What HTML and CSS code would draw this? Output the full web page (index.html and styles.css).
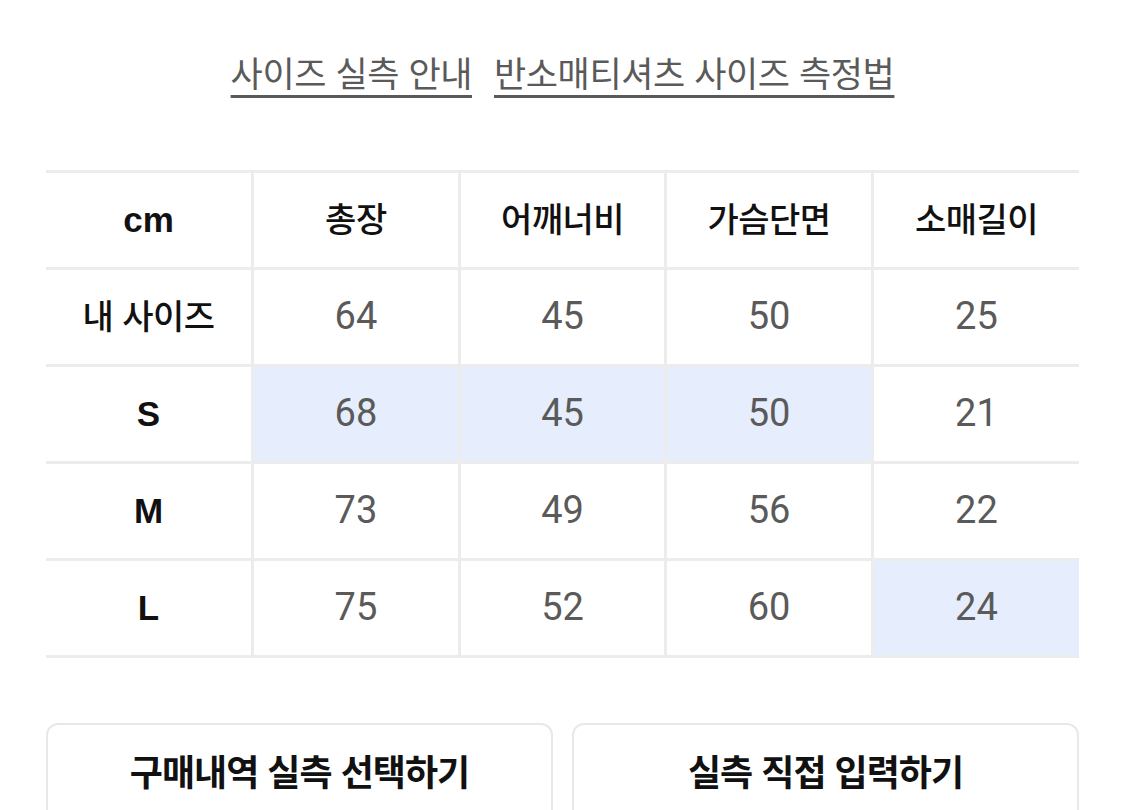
FILE: index.html
```html
<!DOCTYPE html>
<html lang="ko">
<head>
<meta charset="utf-8">
<title>사이즈 실측 안내</title>
<link rel="stylesheet" href="styles.css">
</head>
<body>
<main class="page">
  <nav class="links">
    <a href="#" class="link">사이즈 실측 안내</a>
    <a href="#" class="link">반소매티셔츠 사이즈 측정법</a>
  </nav>
  <table class="size-table">
    <thead>
      <tr>
        <th class="unit">cm</th><th>총장</th><th>어깨너비</th><th>가슴단면</th><th>소매길이</th>
      </tr>
    </thead>
    <tbody>
      <tr>
        <th>내 사이즈</th><td>64</td><td>45</td><td>50</td><td>25</td>
      </tr>
      <tr>
        <th class="size">S</th><td class="hl">68</td><td class="hl">45</td><td class="hl">50</td><td>21</td>
      </tr>
      <tr>
        <th class="size">M</th><td>73</td><td>49</td><td>56</td><td>22</td>
      </tr>
      <tr>
        <th class="size">L</th><td>75</td><td>52</td><td>60</td><td class="hl">24</td>
      </tr>
    </tbody>
  </table>
  <div class="actions">
    <button class="btn">구매내역 실측 선택하기</button>
    <button class="btn">실측 직접 입력하기</button>
  </div>
</main>
</body>
</html>
```
FILE: styles.css
```css
html, body {
  margin: 0;
  padding: 0;
  background: #fff;
}
body {
  font-family: "Noto Sans CJK KR", "Noto Sans", sans-serif;
  color: #111;
  overflow: hidden;
}
.page {
  width: 1033px;
  padding: 46px 0 0 46px;
}
.links {
  display: flex;
  justify-content: center;
  gap: 22px;
  height: 124px;
}
.link {
  font-size: 35px;
  letter-spacing: -0.4px;
  color: #5a5a5a;
  text-decoration: underline;
  text-decoration-thickness: 3px;
  text-underline-offset: 8px;
  line-height: 52px;
}
.size-table {
  width: 1033px;
  table-layout: fixed;
  border-collapse: collapse;
}
.size-table th,
.size-table td {
  height: 94px;
  padding: 0;
  border: 3px solid #ececec;
  text-align: center;
  vertical-align: middle;
}
.size-table tr > :first-child { border-left: none; }
.size-table tr > :last-child { border-right: none; }
.size-table th {
  font-size: 34px;
  font-weight: 500;
  color: #111;
  letter-spacing: -0.5px;
  height: 88px;
  padding-bottom: 6px;
}
.size-table th.unit,
.size-table th.size {
  font-family: "Liberation Sans", "Noto Sans CJK KR", sans-serif;
  font-weight: 700;
  font-size: 35px;
  letter-spacing: 0;
  height: 94px;
  padding-bottom: 0;
}
.size-table td {
  font-family: Roboto, "Noto Sans", sans-serif;
  font-size: 38px;
  color: #5a5a5a;
  height: 91px;
  padding-bottom: 3px;
}
.size-table td.hl {
  background: #e6edfc;
}
.actions {
  display: flex;
  gap: 19px;
  margin-top: 65px;
}
.btn {
  flex: 1;
  height: 100px;
  padding: 0 0 6px;
  background: #fff;
  border: 2px solid #e8e8e8;
  border-radius: 12px;
  font-family: "Noto Sans CJK KR", sans-serif;
  font-size: 36px;
  font-weight: 700;
  letter-spacing: -1px;
  color: #111;
}
```
